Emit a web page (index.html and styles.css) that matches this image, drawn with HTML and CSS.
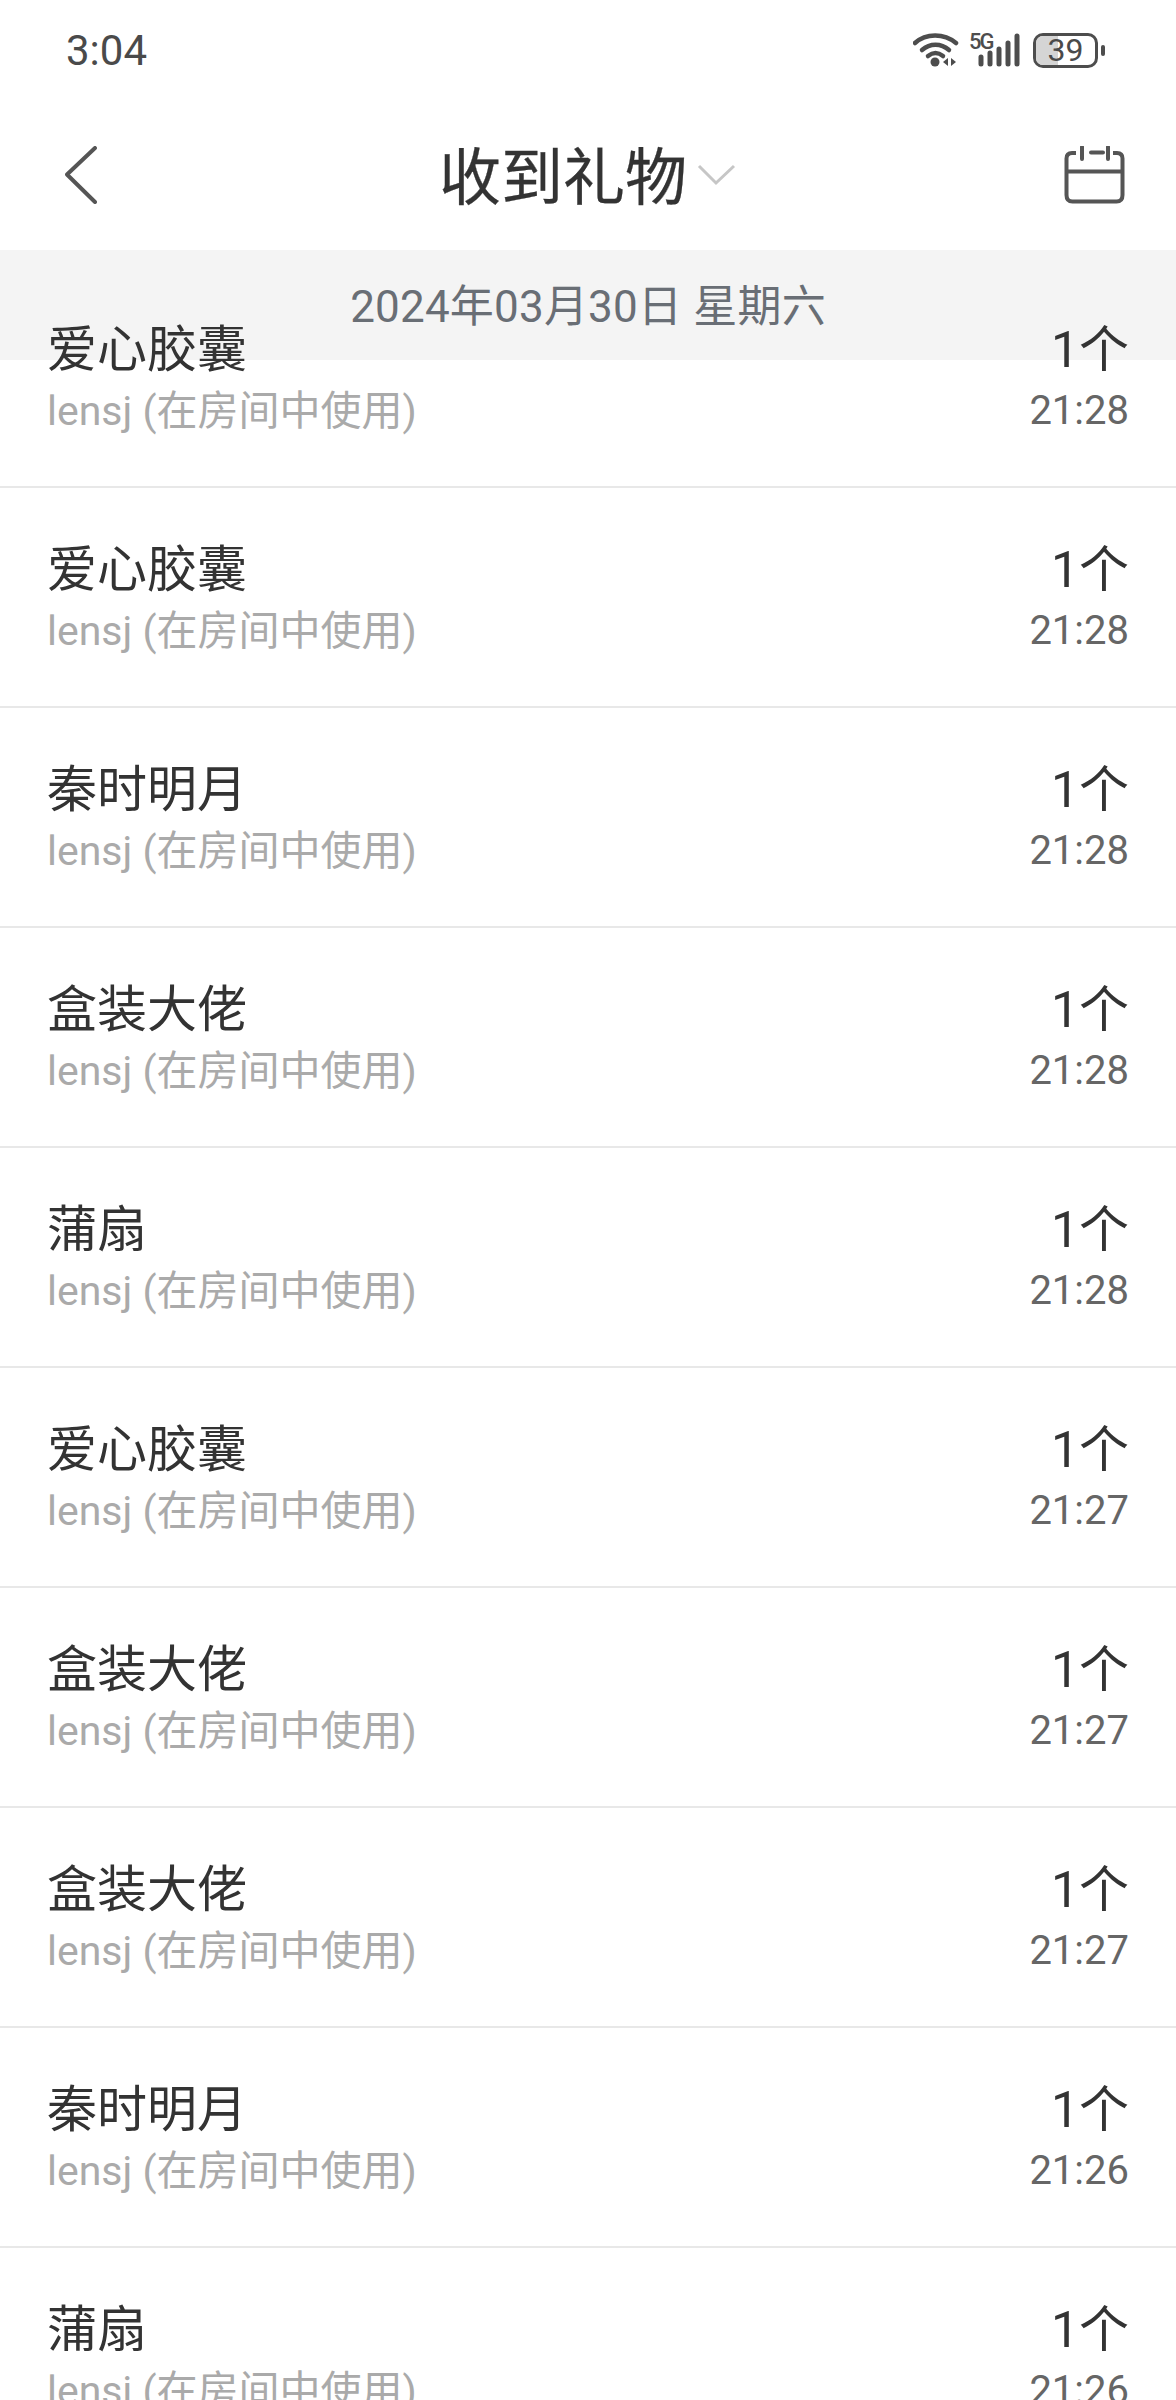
FILE: index.html
```html
<!DOCTYPE html>
<html>
<head>
<meta charset="utf-8">
<title>收到礼物</title>
<link rel="stylesheet" href="styles.css">
</head>
<body>
<div class="page">

<div class="statusbar">
	<span class="clock">3:04</span>
	<div class="statusicons">
		<svg class="wifi" width="46" height="36" viewBox="0 0 46 36">
			<path d="M2 11C13 1 31 1 43 11" fill="none" stroke="#4d4d4d" stroke-width="4.5" stroke-linecap="round"/>
			<path d="M9 18C17 11 28 11 36 18" fill="none" stroke="#4d4d4d" stroke-width="4.5" stroke-linecap="round"/>
			<path d="M15 24C20 20 25 20 30 24" fill="none" stroke="#4d4d4d" stroke-width="4.5" stroke-linecap="round"/>
			<circle cx="22" cy="30" r="4.5" fill="#4d4d4d"/>
			<path d="M35 26v8l-5-4zM38 26v8l5-4z" fill="#4d4d4d"/>
		</svg>
		<div class="signal">
			<span class="fiveg">5G</span>
			<svg width="44" height="34" viewBox="0 0 44 34">
				<g stroke="#4d4d4d" stroke-width="5" stroke-linecap="round">
					<path d="M4 24v7M13 20v11M22 16v15M31 10v21M40 3v28"/>
				</g>
			</svg>
		</div>
		<div class="battery">
			<div class="battery-fill"></div>
			<span class="battery-num">39</span>
		</div>
		<div class="battery-nub"></div>
	</div>
</div>

<div class="nav">
	<svg class="back" width="32" height="58" viewBox="0 0 32 58">
		<path d="M30 2L2 28.500L30 56" fill="none" stroke="#555" stroke-width="4" stroke-linecap="round" stroke-linejoin="round"/>
	</svg>
	<div class="nav-title">
		<span>收到礼物</span>
		<svg width="40" height="22" viewBox="0 0 40 22">
			<path d="M2 2L19 19L37 2" fill="none" stroke="#c6c6c6" stroke-width="3"/>
		</svg>
	</div>
	<svg class="calendar" width="61" height="58" viewBox="0 0 61 58">
		<path d="M12 7H8C4.500 7 2.500 9 2.500 12.500V49C2.500 53 4.500 55.500 8.500 55.500H52.500C56.500 55.500 58.500 53 58.500 49V12.500C58.500 9 56.500 7 53 7H49" fill="none" stroke="#555" stroke-width="4"/>
		<path d="M2.500 25.500H58.500" stroke="#555" stroke-width="4"/>
		<path d="M18 1V13M44 1V13M27 6.500H39" stroke="#555" stroke-width="4" stroke-linecap="round"/>
	</svg>
</div>

<div class="dateband">2024年03月30日 星期六</div>

<div class="list">
	<div class="row"><div class="row-left"><div class="gift">爱心胶囊</div><div class="from">lensj (在房间中使用)</div></div><div class="row-right"><div class="count">1个</div><div class="time">21:28</div></div></div>
	<div class="row"><div class="row-left"><div class="gift">爱心胶囊</div><div class="from">lensj (在房间中使用)</div></div><div class="row-right"><div class="count">1个</div><div class="time">21:28</div></div></div>
	<div class="row"><div class="row-left"><div class="gift">秦时明月</div><div class="from">lensj (在房间中使用)</div></div><div class="row-right"><div class="count">1个</div><div class="time">21:28</div></div></div>
	<div class="row"><div class="row-left"><div class="gift">盒装大佬</div><div class="from">lensj (在房间中使用)</div></div><div class="row-right"><div class="count">1个</div><div class="time">21:28</div></div></div>
	<div class="row"><div class="row-left"><div class="gift">蒲扇</div><div class="from">lensj (在房间中使用)</div></div><div class="row-right"><div class="count">1个</div><div class="time">21:28</div></div></div>
	<div class="row"><div class="row-left"><div class="gift">爱心胶囊</div><div class="from">lensj (在房间中使用)</div></div><div class="row-right"><div class="count">1个</div><div class="time">21:27</div></div></div>
	<div class="row"><div class="row-left"><div class="gift">盒装大佬</div><div class="from">lensj (在房间中使用)</div></div><div class="row-right"><div class="count">1个</div><div class="time">21:27</div></div></div>
	<div class="row"><div class="row-left"><div class="gift">盒装大佬</div><div class="from">lensj (在房间中使用)</div></div><div class="row-right"><div class="count">1个</div><div class="time">21:27</div></div></div>
	<div class="row"><div class="row-left"><div class="gift">秦时明月</div><div class="from">lensj (在房间中使用)</div></div><div class="row-right"><div class="count">1个</div><div class="time">21:26</div></div></div>
	<div class="row"><div class="row-left"><div class="gift">蒲扇</div><div class="from">lensj (在房间中使用)</div></div><div class="row-right"><div class="count">1个</div><div class="time">21:26</div></div></div>
</div>

</div>
</body>
</html>
```

FILE: styles.css
```css
html, body {
	margin: 0;
	padding: 0;
	background: #fff;
}
body {
	font-family: Roboto, "Noto Sans CJK SC", sans-serif;
}
.page {
	width: 1176px;
	height: 2400px;
	overflow: hidden;
}

/* status bar */
.statusbar {
	height: 100px;
	display: flex;
	align-items: center;
	justify-content: space-between;
	padding: 0 71px 0 66px;
}
.clock {
	font-size: 42px;
	color: #4a4a4a;
}
.statusicons {
	display: flex;
	align-items: center;
	gap: 12px;
}
.signal {
	position: relative;
	width: 50px;
	height: 34px;
}
.signal svg {
	position: absolute;
	right: 0;
	top: 0;
}
.fiveg {
	position: absolute;
	left: -2px;
	top: -3px;
	font-size: 22px;
	font-weight: 500;
	letter-spacing: -2px;
	line-height: 24px;
	color: #4d4d4d;
}
.battery {
	position: relative;
	display: flex;
	align-items: center;
	justify-content: center;
	width: 65px;
	height: 35px;
	box-sizing: border-box;
	border: 3px solid #4d4d4d;
	border-radius: 10px;
}
.battery-fill {
	position: absolute;
	left: 0;
	top: 0;
	bottom: 0;
	width: 38%;
	background: #d5d5d5;
	border-radius: 7px 0 0 7px;
}
.battery-num {
	position: relative;
	font-size: 32px;
	line-height: 29px;
	color: #4a4a4a;
}
.battery-nub {
	width: 4px;
	height: 11px;
	margin-left: -9px;
	background: #4d4d4d;
	border-radius: 2px;
}

/* nav */
.nav {
	height: 150px;
	display: grid;
	grid-template-columns: 1fr auto 1fr;
	align-items: center;
	padding: 0 51px;
}
.back {
	margin-left: 14px;
}
.nav-title {
	display: flex;
	align-items: center;
	gap: 10px;
	font-size: 62px;
	color: #333;
}
.nav-title span {
	margin-top: -5px;
	-webkit-text-stroke: 0.3px #333;
}
.calendar {
	justify-self: end;
}

/* date header, rows run up under it */
.dateband {
	height: 110px;
	box-sizing: border-box;
	padding-top: 4px;
	line-height: 106px;
	background: #f4f4f4;
	text-align: center;
	font-size: 44px;
	letter-spacing: 0.2px;
	color: #696e75;
}
.list {
	margin-top: -92px;
}
.row {
	height: 220px;
	box-sizing: border-box;
	border-bottom: 2px solid #e8e8e8;
	padding: 52px 47px 0;
	display: flex;
	justify-content: space-between;
}
.gift, .count {
	font-size: 50px;
	line-height: 60px;
	color: #333;
}
.from, .time {
	font-size: 41px;
	line-height: 62px;
}
.from {
	color: #aaa;
}
.time {
	font-size: 40px;
	color: #666;
}
.row-right {
	text-align: right;
}
```
